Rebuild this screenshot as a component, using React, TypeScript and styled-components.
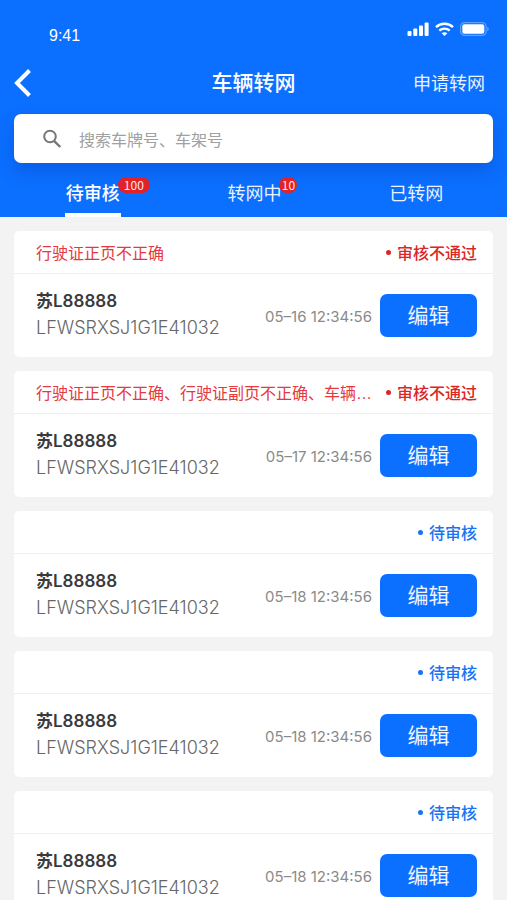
import React, { useState } from 'react';
import styled, { createGlobalStyle } from 'styled-components';

const BLUE = '#0b6fff';
const RED = '#dc2626';
const LATIN_WIDE = 'Inter, "Noto Sans CJK SC", sans-serif';

const GlobalStyle = createGlobalStyle`
  *, *::before, *::after { box-sizing: border-box; }
  body {
    margin: 0;
    background: #f3f3f4;
    font-family: "Liberation Sans", "Noto Sans CJK SC", sans-serif;
    color: #3a3a3c;
  }
  button, input { font: inherit; }
`;

const Screen = styled.div`
  display: flex;
  flex-direction: column;
  height: 100vh;
  overflow: hidden;
`;

const Header = styled.header`
  flex: none;
  background: ${BLUE};
  color: #fff;
`;

const StatusBar = styled.div`
  display: flex;
  justify-content: space-between;
  align-items: flex-start;
  padding: 20px 18px 0 49px;
  height: 56px;
`;

const Clock = styled.time`
  padding-top: 6px;
  font-size: 16px;
  line-height: 20px;
`;

const StatusIcons = styled.div`
  display: flex;
  align-items: center;
  gap: 6px;
  height: 18px;
`;

const NavBar = styled.div`
  display: grid;
  grid-template-columns: 1fr auto 1fr;
  align-items: center;
  height: 54px;
  padding: 0 22px 0 12px;
`;

const BackButton = styled.button`
  justify-self: start;
  display: flex;
  padding: 0;
  border: 0;
  background: none;
  color: inherit;
`;

const Title = styled.h1`
  margin: 0;
  padding-left: 10px;
  font-size: 21px;
  line-height: 28px;
  font-weight: 500;
`;

const ApplyLink = styled.a`
  justify-self: end;
  padding-top: 2px;
  color: #e9f2ff;
  font-size: 18px;
  line-height: 28px;
  text-decoration: none;
`;

const SearchBox = styled.label`
  display: flex;
  align-items: center;
  gap: 17px;
  height: 49px;
  margin: 4px 14px 0;
  padding: 0 28px;
  border-radius: 7px;
  background: #fff;
  box-shadow: 0 8px 18px rgba(0, 50, 150, 0.28);
`;

const SearchInput = styled.input`
  flex: 1;
  min-width: 0;
  padding: 4px 0 0;
  border: 0;
  outline: 0;
  background: none;
  font-size: 16px;
  line-height: 24px;
  color: #3a3a3c;
  &::placeholder { color: #a0a0a0; opacity: 1; }
`;

const Tabs = styled.div`
  display: grid;
  grid-template-columns: repeat(3, 1fr);
  justify-items: center;
  padding: 0 10px 0 12px;
  height: 54px;
`;

const Tab = styled.button<{ $active: boolean }>`
  position: relative;
  padding: 8px 1px 0;
  border: 0;
  border-bottom: 4px solid ${(p) => (p.$active ? '#fff' : 'transparent')};
  background: none;
  color: ${(p) => (p.$active ? '#fff' : '#e9f2ff')};
  font-size: 18px;
  font-weight: ${(p) => (p.$active ? 500 : 400)};
`;

const Badge = styled.span<{ $short: boolean }>`
  position: absolute;
  left: calc(100% - 3px);
  top: 14px;
  min-width: 18px;
  padding: 0 ${(p) => (p.$short ? 2 : 6)}px;
  border-radius: 8px;
  background: #e12228;
  color: #ffe9e9;
  font-family: "Noto Sans CJK SC", sans-serif;
  font-size: 12px;
  line-height: 16px;
  font-weight: 400;
`;

const List = styled.main`
  flex: 1;
  min-height: 0;
  display: flex;
  flex-direction: column;
  gap: 14px;
  padding: 14px 14px 0;
  overflow-y: auto;
  scrollbar-width: none;
`;

const Card = styled.article`
  flex: none;
  border-radius: 5px;
  background: #fff;
`;

const CardHead = styled.div`
  display: flex;
  align-items: center;
  justify-content: space-between;
  gap: 12px;
  height: 43px;
  padding: 4px 16px 0 22px;
  border-bottom: 1px solid #efefef;
  font-size: 16px;
  line-height: 24px;
`;

const Reason = styled.span`
  min-width: 0;
  overflow: hidden;
  white-space: nowrap;
  text-overflow: ellipsis;
  color: #e5393d;
`;

const Status = styled.span<{ $rejected: boolean }>`
  flex: none;
  display: flex;
  align-items: center;
  gap: 6px;
  font-weight: 500;
  color: ${(p) => (p.$rejected ? RED : '#1673f5')};

  &::before {
    content: '';
    width: 5px;
    height: 5px;
    margin-bottom: 4px;
    border-radius: 50%;
    background: currentColor;
  }
`;

const CardBody = styled.div`
  display: flex;
  align-items: center;
  height: 83px;
  padding: 0 16px 0 22px;
`;

const Vehicle = styled.div`
  flex: 1;
  min-width: 0;
  padding-bottom: 3px;
`;

const Plate = styled.h2`
  margin: 0;
  font-family: ${LATIN_WIDE};
  font-size: 17px;
  line-height: 26px;
  font-weight: 600;
`;

const Vin = styled.div`
  font-family: ${LATIN_WIDE};
  font-size: 18px;
  line-height: 27px;
  font-weight: 300;
  color: #666;
`;

const SubmittedAt = styled.time`
  margin-right: 8px;
  padding-top: 2px;
  font-family: ${LATIN_WIDE};
  font-size: 15px;
  line-height: 24px;
  color: #8a8a8a;
`;

const EditButton = styled.button`
  width: 97px;
  height: 43px;
  padding: 0;
  border: 0;
  border-radius: 7px;
  background: ${BLUE};
  color: #eef5ff;
  font-size: 21px;
  line-height: 43px;
`;

const SignalIcon = () => (
  <svg width="22" height="14" viewBox="0 0 22 14" fill="currentColor" aria-hidden="true">
    <rect x="0.5" y="9" width="4" height="5" rx="1" />
    <rect x="6.3" y="6.5" width="4" height="7.5" rx="1" />
    <rect x="12" y="3.6" width="4" height="10.4" rx="1" />
    <rect x="17.6" y="0.6" width="4" height="13.4" rx="1" />
  </svg>
);

const WifiIcon = () => (
  <svg width="19" height="14" viewBox="0 0 19 14" fill="none" stroke="currentColor" strokeWidth="2.3" aria-hidden="true">
    <path d="M1 5.1C5.7.6 13.3.6 18 5.1" />
    <path d="M4.3 8.6c2.9-2.7 7.5-2.7 10.4 0" />
    <path d="M6.7 11.2c1.6-1.4 4-1.4 5.6 0L9.5 14z" fill="currentColor" stroke="none" />
  </svg>
);

const BatteryIcon = () => (
  <svg width="29" height="14" viewBox="0 0 29 14" aria-hidden="true">
    <rect x="0.6" y="0.6" width="25.5" height="12.8" rx="4" fill="none" stroke="#fff" strokeOpacity="0.35" strokeWidth="1.2" />
    <rect x="2.3" y="2.3" width="22" height="9.4" rx="2" fill="#fff" />
    <path d="M27.4 4.7c1.7.8 1.7 3.8 0 4.6z" fill="#fff" fillOpacity="0.4" />
  </svg>
);

const BackIcon = () => (
  <svg width="20" height="30" viewBox="0 0 20 30" fill="none" stroke="currentColor" strokeWidth="4" aria-hidden="true">
    <path d="M17.5 2.5 5 15l12.5 12.5" />
  </svg>
);

const SearchIcon = () => (
  <svg width="20" height="20" viewBox="0 0 20 20" fill="none" stroke="#777" strokeWidth="2" aria-hidden="true">
    <circle cx="8" cy="7.5" r="5.8" />
    <path d="m12 11.8 6.3 6.2" strokeWidth="2.4" />
  </svg>
);

const TABS = [
  { label: '待审核', count: 100 },
  { label: '转网中', count: 10 },
  { label: '已转网', count: 0 },
];

const RECORDS = [
  { reason: '行驶证正页不正确', rejected: true, date: '05–16 12:34:56' },
  { reason: '行驶证正页不正确、行驶证副页不正确、车辆…', rejected: true, date: '05–17 12:34:56' },
  { reason: '', rejected: false, date: '05–18 12:34:56' },
  { reason: '', rejected: false, date: '05–18 12:34:56' },
  { reason: '', rejected: false, date: '05–18 12:34:56' },
];

export default function App() {
  const [active, setActive] = useState(0);

  return (
    <>
      <GlobalStyle />
      <Screen lang="zh-CN">
        <Header>
          <StatusBar>
            <Clock>9:41</Clock>
            <StatusIcons>
              <SignalIcon />
              <WifiIcon />
              <BatteryIcon />
            </StatusIcons>
          </StatusBar>
          <NavBar>
            <BackButton type="button" aria-label="返回">
              <BackIcon />
            </BackButton>
            <Title>车辆转网</Title>
            <ApplyLink href="#apply">申请转网</ApplyLink>
          </NavBar>
          <SearchBox>
            <SearchIcon />
            <SearchInput type="text" placeholder="搜索车牌号、车架号" aria-label="搜索" />
          </SearchBox>
          <Tabs role="tablist">
            {TABS.map((tab, i) => (
              <Tab
                key={tab.label}
                type="button"
                role="tab"
                aria-selected={i === active}
                $active={i === active}
                onClick={() => setActive(i)}
              >
                {tab.label}
                {tab.count > 0 && <Badge $short={tab.count < 100}>{tab.count}</Badge>}
              </Tab>
            ))}
          </Tabs>
        </Header>
        <List>
          {RECORDS.map((record, i) => (
            <Card key={i}>
              <CardHead>
                <Reason>{record.reason}</Reason>
                <Status $rejected={record.rejected}>{record.rejected ? '审核不通过' : '待审核'}</Status>
              </CardHead>
              <CardBody>
                <Vehicle>
                  <Plate>苏L88888</Plate>
                  <Vin>LFWSRXSJ1G1E41032</Vin>
                </Vehicle>
                <SubmittedAt>{record.date}</SubmittedAt>
                <EditButton type="button">编辑</EditButton>
              </CardBody>
            </Card>
          ))}
        </List>
      </Screen>
    </>
  );
}
